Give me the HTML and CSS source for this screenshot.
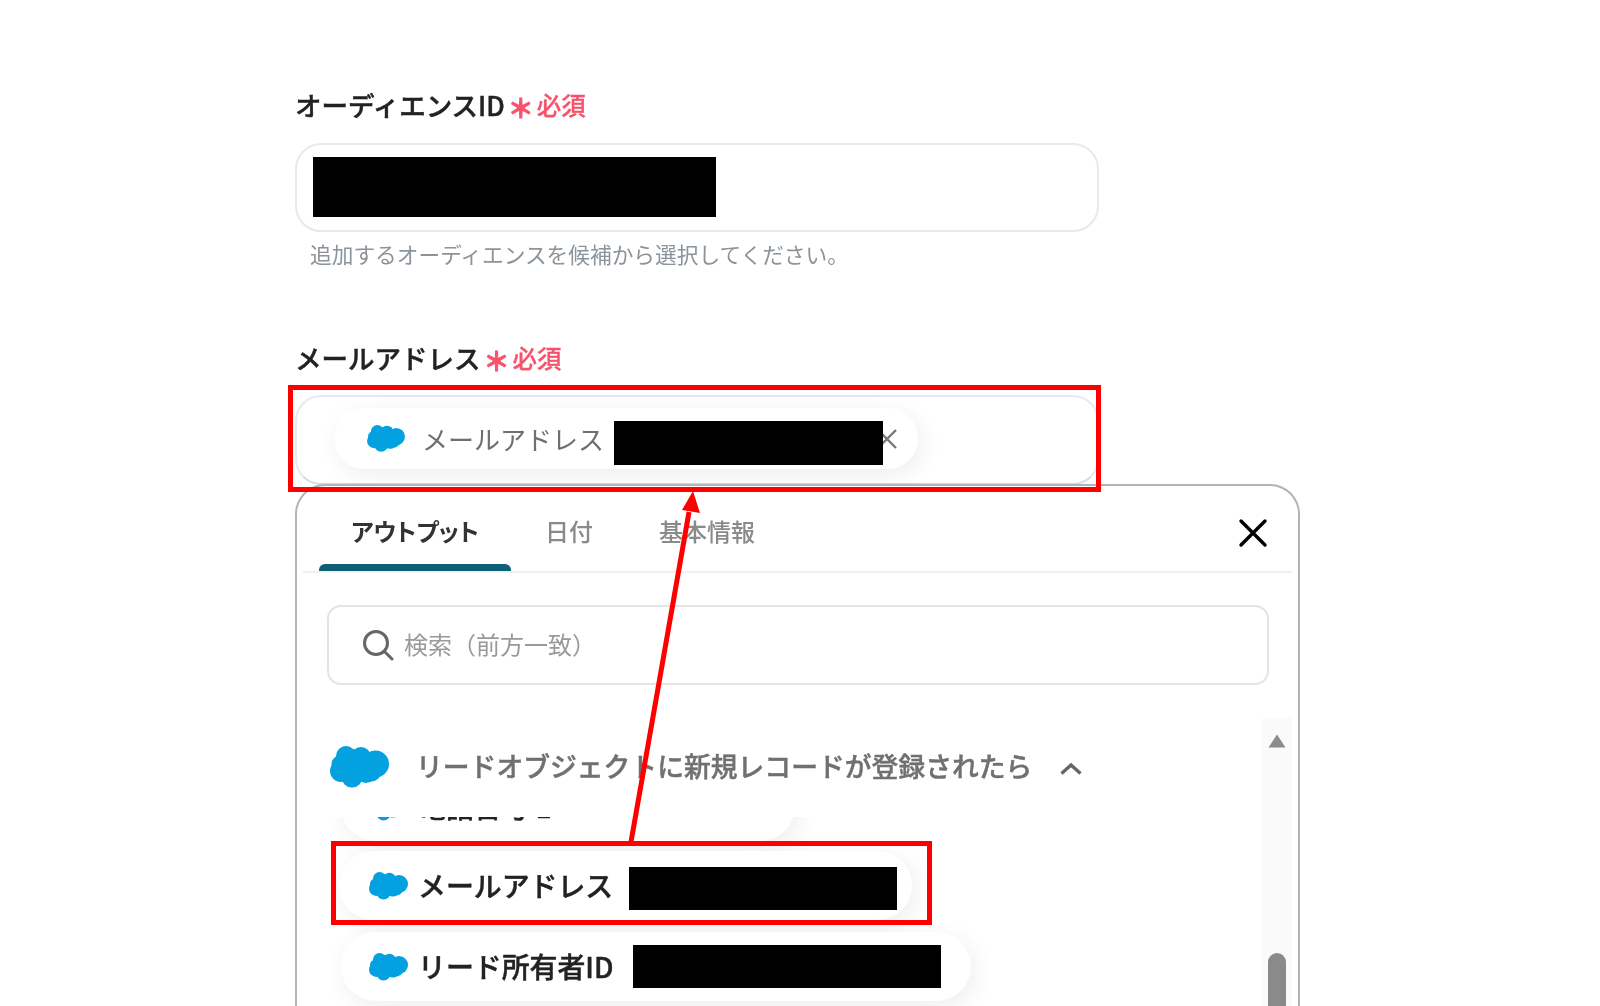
FILE: index.html
```html
<!DOCTYPE html>
<html lang="ja">
<head>
<meta charset="utf-8">
<title>オーディエンスID</title>
<link rel="stylesheet" href="styles.css">
</head>
<body>
<svg width="0" height="0" class="defs" aria-hidden="true">
  <symbol id="cloud" viewBox="0 0 59 42">
    <circle cx="16" cy="10" r="10"/><circle cx="31" cy="11" r="10"/><circle cx="45.5" cy="18" r="13.5"/>
    <circle cx="11" cy="25" r="11"/><circle cx="22" cy="31" r="10.5"/><circle cx="36" cy="27" r="10"/>
    <circle cx="28" cy="20" r="12"/><circle cx="23" cy="13" r="10"/><circle cx="41" cy="25" r="10.5"/><circle cx="10" cy="18" r="8.5"/>
  </symbol>
</svg>
<main class="page">
  <section class="field field-audience">
    <h2 class="label">オーディエンスID<span class="req"><span class="star">＊</span>必須</span></h2>
    <div class="input input-audience"><span class="mask mask-audience"></span></div>
    <p class="hint">追加するオーディエンスを候補から選択してください。</p>
  </section>
  <section class="field field-mail">
    <h2 class="label">メールアドレス<span class="req"><span class="star">＊</span>必須</span></h2>
    <div class="input input-mail">
      <div class="chip">
        <svg class="cloud-s"><use href="#cloud"/></svg>
        <span class="chip-text">メールアドレス</span>
        <span class="mask mask-chip"></span>
        <svg class="chip-x" viewBox="0 0 22 22"><path d="M2 2 20 20M20 2 2 20"/></svg>
      </div>
    </div>
  </section>
  <section class="panel">
    <header class="tabs">
      <div class="tab tab-active">アウトプット</div>
      <div class="tab tab-date">日付</div>
      <div class="tab tab-info">基本情報</div>
      <svg class="close" viewBox="0 0 30 30"><path d="M3 3 27 27M27 3 3 27"/></svg>
    </header>
    <div class="search">
      <svg class="search-icon" viewBox="0 0 32 32"><circle cx="14" cy="14" r="11.5"/><path d="M22.5 22.5 30 30"/></svg>
      <span class="search-text">検索（前方一致）</span>
    </div>
    <div class="results">
      <div class="scroll-track">
        <svg class="scroll-up" viewBox="0 0 20 16"><path d="M10 1.5 18.5 14.5H1.5Z"/></svg>
        <div class="scroll-thumb"></div>
      </div>
      <div class="group">
        <svg class="cloud-l"><use href="#cloud"/></svg>
        <span class="group-title">リードオブジェクトに新規レコードが登録されたら</span>
        <svg class="chevron" viewBox="0 0 24 14"><path d="M2.5 11.5 12 3l9.5 8.5"/></svg>
      </div>
      <div class="list">
        <div class="item item-clipped">
          <svg class="cloud-m"><use href="#cloud"/></svg>
          <span class="item-text">電話番号 1</span>
        </div>
        <div class="item item-mail">
          <svg class="cloud-m"><use href="#cloud"/></svg>
          <span class="item-text">メールアドレス</span>
          <span class="mask mask-mail"></span>
        </div>
        <div class="item item-owner">
          <svg class="cloud-m"><use href="#cloud"/></svg>
          <span class="item-text">リード所有者ID</span>
          <span class="mask mask-owner"></span>
        </div>
      </div>
    </div>
  </section>
</main>
<div class="note note-top"></div>
<div class="note note-bottom"></div>
<svg class="arrow" viewBox="0 0 1600 1006" aria-hidden="true">
  <path class="arrow-line" d="M631 842 689 512"/>
  <path class="arrow-head" d="M693 491 700 513 682 510Z"/>
</svg>
</body>
</html>
```
FILE: styles.css
```css
* { box-sizing: border-box; }
html, body { margin: 0; height: 100%; overflow: hidden; background: #fff; }
body {
  position: relative;
  font-family: "Noto Sans CJK JP", "Noto Sans", sans-serif;
  color: #333;
  filter: blur(.45px);
}
.defs { position: absolute; }
svg use { fill: #03a1e0; }

.page { width: 1005px; margin-left: 295px; padding-top: 85px; }
.field { width: 804px; }
.field-mail { margin-top: 68px; }
.label {
  margin: 0;
  display: flex;
  align-items: center;
  height: 40px;
  font-size: 26.5px;
  font-weight: 500;
  color: #222;
  line-height: 40px;
  -webkit-text-stroke: .45px #222;
}
.req { display: flex; align-items: center; margin-left: 3px; font-size: 24.5px; font-weight: 500; color: #f7536d; -webkit-text-stroke: .3px #f7536d; }
.star { font-size: 26px; font-weight: 700; margin: 3px 3px 0 0; -webkit-text-stroke: 1px #f7536d; }
.input { border: 2px solid #e6e9ee; border-radius: 26px; background: #fff; }
.input-audience { height: 89px; margin-top: 18px; padding: 12px 16px; }
.input-mail { height: 90px; margin-top: 17px; padding: 11px 37px; border-bottom-color: #d8dbe0; }
.hint { margin: 6px 0 0 15px; font-size: 21.7px; line-height: 32px; color: #8b939b; white-space: nowrap; }
.mask { display: block; background: #000; flex: none; }
.mask-audience { width: 403px; height: 60px; }

.chip {
  display: flex;
  align-items: center;
  width: 584px;
  height: 61px;
  padding-left: 33px;
  border-radius: 31px;
  background: #fff;
  box-shadow: 4px 6px 24px rgba(0, 0, 0, .07);
}
.cloud-s { width: 38px; height: 27px; flex: none; }
.chip-text { margin-left: 17px; font-size: 26px; color: #6f6f6f; width: 192px; flex: none; white-space: nowrap; }
.mask-chip { position: relative; z-index: 1; width: 269px; height: 44px; margin-top: 8px; }
.chip-x { width: 22px; height: 22px; margin-left: -7px; fill: none; stroke: #777; stroke-width: 2.4; }

.panel {
  height: 560px;
  margin-top: -1px;
  position: relative;
  border: 2px solid #b4b4b4;
  border-bottom: 0;
  border-radius: 30px 30px 0 0;
  background: #fff;
  padding: 0 6px;
}
.tabs { display: flex; align-items: center; height: 87px; border-bottom: 2px solid #f0f0f0; padding: 8px 0 0 16px; }
.tab { font-size: 24px; font-weight: 500; color: #8a8a8a; height: 100%; display: flex; align-items: center; padding-bottom: 4px; }
.tab-active { width: 192px; justify-content: center; color: #333; font-weight: 700; position: relative; font-feature-settings: "palt"; }
.tab-active::after {
  content: "";
  position: absolute;
  left: 0; right: 0; bottom: 0;
  height: 7px;
  background: #0d5f76;
  border-radius: 6px 6px 0 0;
}
.tab-date { margin-left: 34px; }
.tab-info { margin-left: 66px; }
.close { width: 30px; height: 30px; margin-left: auto; margin-right: 24px; fill: none; stroke: #000; stroke-width: 3.4; stroke-linecap: round; }

.search {
  display: flex;
  align-items: center;
  width: 942px;
  height: 80px;
  margin: 32px 0 0 24px;
  padding-left: 33px;
  border: 2px solid #e4e4e4;
  border-radius: 14px;
  background: #fff;
}
.search-icon { width: 32px; height: 32px; fill: none; stroke: #666; stroke-width: 3; stroke-linecap: round; }
.search-text { margin: 0 0 3px 10px; font-size: 24px; color: #999; }

.results { position: relative; height: 320px; margin-top: 33px; }
.scroll-track { position: absolute; right: 0; top: 0; bottom: 0; width: 30px; background: #fafafa; }
.scroll-up { display: block; width: 20px; height: 16px; margin: 15px 0 0 5px; fill: #8c8c8c; }
.scroll-thumb { width: 18px; height: 80px; margin: 204px 0 0 6px; background: #8a8a8a; border-radius: 9px 9px 0 0; }

.group { display: flex; align-items: center; height: 98px; padding-left: 27px; }
.cloud-l { width: 59px; height: 42px; flex: none; }
.group-title { margin: 0 0 3px 27px; font-size: 26.8px; font-weight: 500; color: #707070; white-space: nowrap; -webkit-text-stroke: .45px #707070; }
.chevron { width: 24px; height: 14px; margin: 4px 0 0 27px; fill: none; stroke: #666; stroke-width: 3.4; }

.list { overflow: hidden; height: 190px; margin-top: 1px; padding: 0 0 20px 38px; }
.item {
  display: flex;
  align-items: center;
  height: 69px;
  border-radius: 35px;
  background: #fff;
  box-shadow: 4px 6px 24px rgba(0, 0, 0, .07);
  padding-left: 28px;
}
.cloud-m { width: 39px; height: 28px; flex: none; }
.item-text { margin: 0 0 2px 10px; font-size: 27.9px; font-weight: 500; color: #222; white-space: nowrap; -webkit-text-stroke: .45px #222; }
.item-clipped { width: 454px; margin-top: -45px; }
.item-mail { width: 573px; margin-top: 10px; margin-left: -2px; padding-left: 30px; }
.item-owner { width: 630px; margin-top: 12px; }
.mask-mail { width: 268px; height: 43px; margin: 6px 0 0 16px; }
.mask-owner { width: 308px; height: 43px; margin-left: 20px; }

.note { position: absolute; border: 5px solid #f00; pointer-events: none; }
.note-top { left: 288px; top: 385px; width: 813px; height: 107px; }
.note-bottom { left: 331px; top: 841px; width: 601px; height: 84px; }
.arrow { position: absolute; left: 0; top: 0; width: 1600px; height: 1006px; pointer-events: none; }
.arrow-line { stroke: #f00; stroke-width: 5; fill: none; }
.arrow-head { fill: #f00; }
```
